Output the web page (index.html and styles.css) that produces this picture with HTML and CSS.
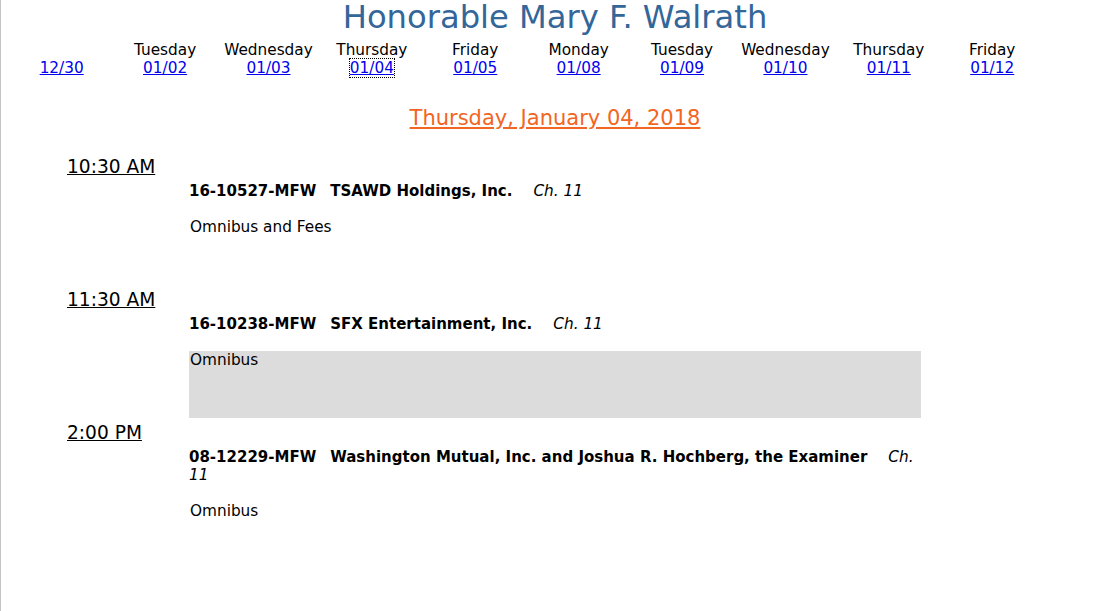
FILE: index.html
```html
<!DOCTYPE html>
<html>
<head>
<meta charset="utf-8">
<title>Honorable Mary F. Walrath</title>
<link rel="stylesheet" href="styles.css">
</head>
<body>
<div class="page">
  <h1 class="judge">Honorable Mary F. Walrath</h1>
  <div class="days">
    <div class="day"><span class="dname">&nbsp;</span><a href="#">12/30</a></div>
    <div class="day"><span class="dname">Tuesday</span><a href="#">01/02</a></div>
    <div class="day"><span class="dname">Wednesday</span><a href="#">01/03</a></div>
    <div class="day"><span class="dname">Thursday</span><a href="#" class="focused">01/04</a></div>
    <div class="day"><span class="dname">Friday</span><a href="#">01/05</a></div>
    <div class="day"><span class="dname">Monday</span><a href="#">01/08</a></div>
    <div class="day"><span class="dname">Tuesday</span><a href="#">01/09</a></div>
    <div class="day"><span class="dname">Wednesday</span><a href="#">01/10</a></div>
    <div class="day"><span class="dname">Thursday</span><a href="#">01/11</a></div>
    <div class="day"><span class="dname">Friday</span><a href="#">01/12</a></div>
  </div>
  <h2 class="date">Thursday, January 04, 2018</h2>

  <div class="slot">
    <div class="time">10:30 AM</div>
    <div class="case">
      <div class="title"><b><span class="num">16-10527-MFW</span>TSAWD Holdings, Inc.</b><span class="ch"><i>Ch. 11</i></span></div>
      <div class="desc">Omnibus and Fees</div>
    </div>
  </div>

  <div class="slot">
    <div class="time">11:30 AM</div>
    <div class="case">
      <div class="title"><b><span class="num">16-10238-MFW</span>SFX Entertainment, Inc.</b><span class="ch"><i>Ch. 11</i></span></div>
      <div class="desc shaded">Omnibus</div>
    </div>
  </div>

  <div class="slot">
    <div class="time">2:00 PM</div>
    <div class="case">
      <div class="title"><b><span class="num">08-12229-MFW</span>Washington Mutual, Inc. and Joshua R. Hochberg, the Examiner</b><span class="ch"><i>Ch. 11</i></span></div>
      <div class="desc">Omnibus</div>
    </div>
  </div>
</div>
</body>
</html>
```

FILE: styles.css
```css
html, body {
  margin: 0;
  padding: 0;
  background: #fff;
}
body {
  font-family: "DejaVu Sans", Verdana, sans-serif;
  color: #000;
}
.page {
  border-left: 1px solid #c4c4c4;
  min-height: 611px;
  box-sizing: border-box;
}
.judge {
  margin: 0;
  font-size: 32.2px;
  font-weight: normal;
  line-height: 35px;
  color: #336699;
  text-align: center;
}
.days {
  display: grid;
  grid-template-columns: repeat(10, 103.4px);
  margin: 6px 0 0 9px;
  font-size: 15.3px;
  line-height: 18px;
}
.day {
  display: flex;
  flex-direction: column;
  align-items: center;
}
.day a {
  color: #0000ee;
  text-decoration: underline;
}
.day a.focused {
  outline: 1px dotted #000;
}
.date {
  margin: 28px 0 0;
  font-size: 21px;
  font-weight: normal;
  line-height: 26px;
  text-align: center;
  color: #f26522;
  text-decoration: underline;
}
.slot {
  margin-top: 4px;
}
.date + .slot {
  margin-top: 25px;
}
.time {
  margin-left: 66px;
  font-size: 18.6px;
  line-height: 22px;
  text-decoration: underline;
}
.case {
  margin: 4px 0 0 188px;
  width: 732px;
  font-size: 15.3px;
  line-height: 18px;
}
.title b {
  font-weight: bold;
  font-size: 15px;
}
.title .num {
  padding-right: 14px;
}
.title .ch {
  padding-left: 21px;
}
.desc {
  margin-top: 18px;
  height: 67px;
  padding-left: 1px;
}
.desc.shaded {
  background: #dcdcdc;
}
```
